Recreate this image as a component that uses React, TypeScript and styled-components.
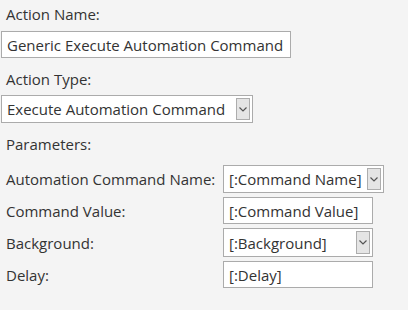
import styled, {createGlobalStyle} from 'styled-components';

const GlobalStyle = createGlobalStyle`
	html, body {
		margin: 0;
		padding: 0;
		background: #f4f4f4;
	}
	body {
		font-family: 'Open Sans', 'Noto Sans', sans-serif;
		font-size: 15px;
		color: #333333;
	}
`;

const Page = styled.div`
	width: 408px;
	height: 310px;
	box-sizing: border-box;
	padding: 3px 0 0 1px;
	display: flex;
	flex-direction: column;
`;

const Label = styled.div`
	padding-left: 5px;
	line-height: 22px;
	white-space: nowrap;
`;

const FieldLabel = styled(Label)<{$gap?: number}>`
	margin-bottom: ${(p) => p.$gap ?? 6}px;
`;

const TextBox = styled.div<{$width: number; $height?: number}>`
	width: ${(p) => p.$width}px;
	height: ${(p) => p.$height ?? 27}px;
	box-sizing: border-box;
	border: 1px solid #ababab;
	background: #ffffff;
	display: flex;
	align-items: center;
	padding-left: 5px;
	white-space: nowrap;
	overflow: hidden;
`;

const SelectBox = styled(TextBox)`
	justify-content: space-between;
	padding-right: 2px;
`;

const DropButton = styled.div`
	width: 14px;
	height: calc(100% - 4px);
	box-sizing: border-box;
	border: 1px solid #adadad;
	background: #e5e5e5;
	display: flex;
	align-items: center;
	justify-content: center;
`;

const Section = styled.div<{$mt?: number}>`
	margin-top: ${(p) => p.$mt ?? 0}px;
`;

const ParamGrid = styled.div`
	display: grid;
	grid-template-columns: 222px auto;
	row-gap: 4px;
	align-items: center;
	justify-items: start;
	margin-top: 10px;
`;

const Chevron = () => (
	<svg width="8" height="5" viewBox="0 0 8 5">
		<path d="M0.5 0.5 L4 4 L7.5 0.5" fill="none" stroke="#555" strokeWidth="1.2" />
	</svg>
);

const Select = ({value, width, height}: {value: string; width: number; height?: number}) => (
	<SelectBox $width={width} $height={height}>
		<span>{value}</span>
		<DropButton>
			<Chevron />
		</DropButton>
	</SelectBox>
);

export default function App() {
	return (
		<Page>
			<GlobalStyle />
			<FieldLabel $gap={6}>Action Name:</FieldLabel>
			<TextBox $width={290}>Generic Execute Automation Command</TextBox>
			<Section $mt={10}>
				<FieldLabel $gap={5}>Action Type:</FieldLabel>
				<Select value="Execute Automation Command" width={252} height={28} />
			</Section>
			<Section $mt={10}>
				<Label>Parameters:</Label>
				<ParamGrid>
					<Label>Automation Command Name:</Label>
					<Select value="[:Command Name]" width={161} height={28} />
					<Label>Command Value:</Label>
					<TextBox $width={150}>[:Command Value]</TextBox>
					<Label>Background:</Label>
					<Select value="[:Background]" width={150} height={29} />
					<Label>Delay:</Label>
					<TextBox $width={150}>[:Delay]</TextBox>
				</ParamGrid>
			</Section>
		</Page>
	);
}
